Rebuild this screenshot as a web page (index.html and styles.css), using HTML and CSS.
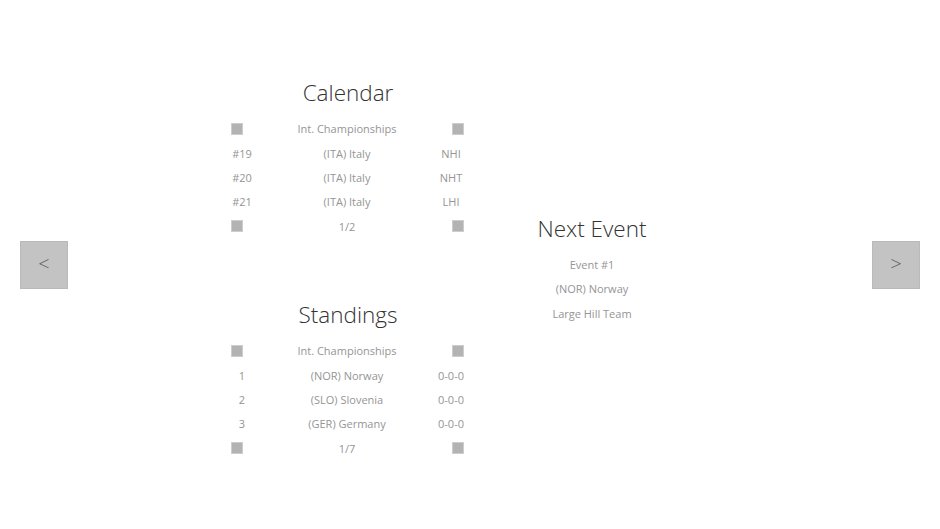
FILE: index.html
```html
<!DOCTYPE html>
<html>
<head>
<meta charset="utf-8">
<link rel="stylesheet" href="styles.css">
</head>
<body>
<div class="page">
  <button class="nav">&lt;</button>
  <div class="content">
    <div class="col">
      <section class="sect">
        <h2 class="title">Calendar</h2>
        <div class="table">
          <span class="cell l"><i class="box"></i></span><span class="cell c">Int. Championships</span><span class="cell r"><i class="box"></i></span>
          <span class="cell l">#19</span><span class="cell c">(ITA) Italy</span><span class="cell r">NHI</span>
          <span class="cell l">#20</span><span class="cell c">(ITA) Italy</span><span class="cell r">NHT</span>
          <span class="cell l">#21</span><span class="cell c">(ITA) Italy</span><span class="cell r">LHI</span>
          <span class="cell l"><i class="box"></i></span><span class="cell c">1/2</span><span class="cell r"><i class="box"></i></span>
        </div>
      </section>
      <section class="sect second">
        <h2 class="title">Standings</h2>
        <div class="table">
          <span class="cell l"><i class="box"></i></span><span class="cell c">Int. Championships</span><span class="cell r"><i class="box"></i></span>
          <span class="cell l">1</span><span class="cell c">(NOR) Norway</span><span class="cell r">0-0-0</span>
          <span class="cell l">2</span><span class="cell c">(SLO) Slovenia</span><span class="cell r">0-0-0</span>
          <span class="cell l">3</span><span class="cell c">(GER) Germany</span><span class="cell r">0-0-0</span>
          <span class="cell l"><i class="box"></i></span><span class="cell c">1/7</span><span class="cell r"><i class="box"></i></span>
        </div>
      </section>
    </div>
    <div class="col next">
      <h2 class="title">Next Event</h2>
      <div class="line">Event #1</div>
      <div class="line">(NOR) Norway</div>
      <div class="line">Large Hill Team</div>
    </div>
  </div>
  <button class="nav">&gt;</button>
</div>
</body>
</html>
```
FILE: styles.css
```css
html, body {
  margin: 0;
  padding: 0;
  background: #ffffff;
}
body {
  font-family: "Open Sans", "DejaVu Sans", sans-serif;
  color: #959595;
}
.page {
  height: 529px;
  box-sizing: border-box;
  padding: 0 20px;
  display: flex;
  align-items: center;
  justify-content: space-between;
}
.nav {
  width: 48px;
  height: 48px;
  box-sizing: border-box;
  background: #c3c3c3;
  border: 1px solid #b9b9b9;
  color: #555555;
  font-family: "Open Sans", sans-serif;
  font-weight: 300;
  font-size: 20px;
  line-height: 1;
  padding: 0 0 2px 0;
  margin: 0;
}
.content {
  display: flex;
  align-items: center;
  gap: 10px;
  padding-top: 8px;
}
.col {
  width: 234px;
  display: flex;
  flex-direction: column;
}
.second {
  margin-top: 60px;
}
.title {
  margin: 0 0 8px 0;
  font-weight: 300;
  font-size: 22.5px;
  line-height: 32px;
  color: #333333;
  text-align: center;
}
.table {
  display: grid;
  grid-template-columns: 22px 1fr 28px;
  grid-auto-rows: 24.4px;
  font-size: 11px;
}
.cell {
  display: flex;
  align-items: center;
  justify-content: center;
  white-space: nowrap;
}
.cell.c {
  padding-left: 4px;
}
.table .l:has(.box) {
  justify-content: flex-start;
}
.table .r:has(.box) {
  justify-content: flex-end;
  padding-right: 1px;
}
.box {
  display: block;
  width: 12px;
  height: 12px;
  box-sizing: border-box;
  background: #b3b3b3;
  border: 1px solid #cdcdcd;
}
.next {
  margin-top: 2px;
  align-items: center;
}
.next .title {
  margin-bottom: 8px;
}
.line {
  height: 24.4px;
  line-height: 24.4px;
  font-size: 11px;
  text-align: center;
}
```
